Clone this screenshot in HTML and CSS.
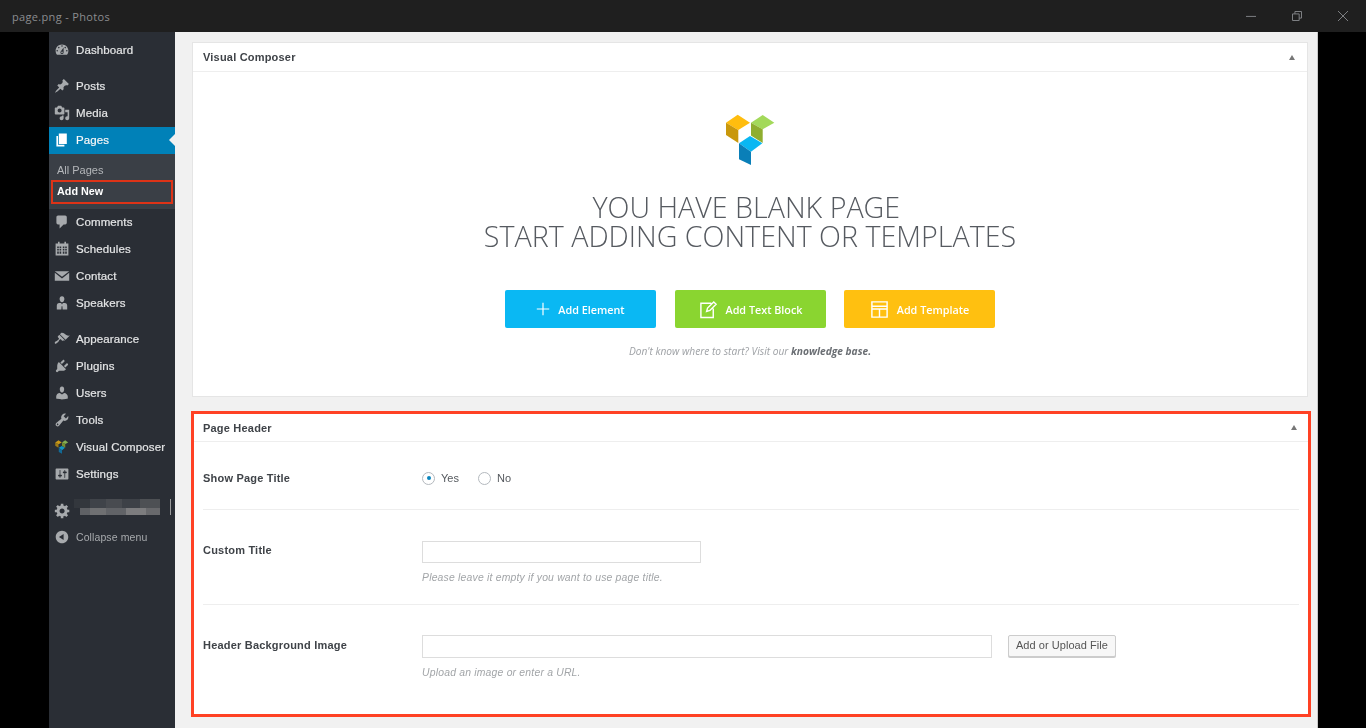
FILE: index.html
```html
<!DOCTYPE html>
<html lang="en">
<head>
<meta charset="utf-8">
<title>page.png - Photos</title>
<link rel="stylesheet" href="styles.css">
</head>
<body>
<div class="app">
  <header class="titlebar">
    <span class="title-text">page.png - Photos</span>
    <div class="win-controls">
      <svg class="win-icon" viewBox="0 0 12 12"><path d="M0 6.500h12" /></svg>
      <svg class="win-icon" viewBox="0 0 12 12"><path d="M.6 3.500h8V11.400h-8zM3.500 3.500V.6h7.900v7.900H8.600" /></svg>
      <svg class="win-icon" viewBox="0 0 12 12"><path d="M0 0l12 12M12 0L0 12" /></svg>
    </div>
  </header>
  <div class="viewer">
    <nav class="sidebar">
      <a class="item"><svg class="ico" viewBox="0 0 20 20"><path d="M3.76 16h12.48c1.1-1.37 1.76-3.11 1.76-5 0-4.42-3.58-8-8-8s-8 3.58-8 8c0 1.89.66 3.63 1.76 5zM10 4c.55 0 1 .45 1 1s-.45 1-1 1-1-.45-1-1 .45-1 1-1zM6 6c.55 0 1 .45 1 1s-.45 1-1 1-1-.45-1-1 .45-1 1-1zm8 0c.55 0 1 .45 1 1s-.45 1-1 1-1-.45-1-1 .45-1 1-1zm-5.37 5.55L12 7v6c0 1.1-.9 2-2 2s-2-.9-2-2c0-.57.24-1.08.63-1.45zM4 10c.55 0 1 .45 1 1s-.45 1-1 1-1-.45-1-1 .45-1 1-1zm12 0c.55 0 1 .45 1 1s-.45 1-1 1-1-.45-1-1 .45-1 1-1zm-5 3c0-.55-.45-1-1-1s-1 .45-1 1 .45 1 1 1 1-.45 1-1z" fill-rule="evenodd"/></svg>Dashboard</a>
      <a class="item gap"><svg class="ico" viewBox="0 0 20 20"><path d="M10.44 3.02l1.82-1.82 6.36 6.35-1.83 1.82c-1.05-.68-2.48-.57-3.41.36l-.75.75c-.92.93-1.04 2.35-.35 3.41l-1.83 1.82-2.41-2.41-2.8 2.79c-.42.42-3.38 2.71-3.8 2.29s1.86-3.39 2.28-3.81l2.79-2.79L4.1 9.36l1.83-1.82c1.05.69 2.48.57 3.4-.36l.75-.75c.93-.92 1.05-2.35.36-3.41z"/></svg>Posts</a>
      <a class="item"><svg class="ico" viewBox="0 0 20 20"><path d="M13 11V4c0-.55-.45-1-1-1h-1.67L9 1H5L3.67 3H2c-.55 0-1 .45-1 1v7c0 .55.45 1 1 1h10c.55 0 1-.45 1-1zM7 4.5c1.38 0 2.5 1.12 2.5 2.5S8.38 9.5 7 9.5 4.5 8.38 4.5 7 5.62 4.5 7 4.5zM14 6h5v10.5c0 1.38-1.12 2.5-2.5 2.5S14 17.88 14 16.5s1.12-2.5 2.5-2.5c.17 0 .34.02.5.05V9h-3V6zm-4 8.05V13h2v3.5c0 1.38-1.12 2.5-2.5 2.5S7 17.88 7 16.5 8.12 14 9.5 14c.17 0 .34.02.5.05z" fill-rule="evenodd"/></svg>Media</a>
      <a class="item current"><svg class="ico" viewBox="0 0 20 20"><path d="M6 15V2h10v13H6zm-1 1h8v2H3V5h2v11z"/></svg>Pages<span class="notch"></span></a>
      <div class="submenu">
        <a class="sub-link">All Pages</a>
        <a class="sub-link active">Add New</a>
      </div>
      <a class="item"><svg class="ico" viewBox="0 0 20 20"><path d="M5 2h9c1.1 0 2 .9 2 2v7c0 1.1-.9 2-2 2h-2l-5 5v-5H5c-1.1 0-2-.9-2-2V4c0-1.1.9-2 2-2z"/></svg>Comments</a>
      <a class="item"><svg class="ico" viewBox="0 0 20 20"><path d="M5 1h2v2h6V1h2v2h3v15H2V3h3V1zM4 7v2h2V7H4zm3 0v2h2V7H7zm4 0v2h2V7h-2zm3 0v2h2V7h-2zM4 10v2h2v-2H4zm3 0v2h2v-2H7zm4 0v2h2v-2h-2zm3 0v2h2v-2h-2zM4 13v3h2v-3H4zm3 0v3h2v-3H7zm4 0v3h2v-3h-2zm3 0v3h2v-3h-2z" fill-rule="evenodd"/></svg>Schedules</a>
      <a class="item"><svg class="ico" viewBox="0 0 20 20"><path d="M1 4h18L10 11 1 4zm0 2l9 7 9-7v10H1V6z"/></svg>Contact</a>
      <a class="item"><svg class="ico" viewBox="0 0 20 20"><path d="M10 1.500c2 0 3 1.600 3 3.400S11.800 9 10 9 7 6.700 7 4.900 8 1.500 10 1.500zM6.500 10h2.300L10 12l1.200-2h2.300c2 0 3 1.500 3 3.500V18h-5.700l-.3-4h-1l-.3 4H3.500v-4.500c0-2 1-3.500 3-3.500z"/></svg>Speakers</a>
      <a class="item gap"><svg class="ico" viewBox="0 0 20 20"><path d="M14.480 11.060L7.410 3.990l1.500-1.500c.5-.56 2.300-.47 3.510.32 1.210.8 1.430 1.280 2.910 2.100 1.180.64 2.450 1.260 4.450.85zm-.71.71L6.700 4.700 4.930 6.470c-.39.39-.39 1.020 0 1.410l1.060 1.060c.39.39.39 1.030 0 1.420-.6.6-1.430 1.110-2.210 1.690-.35.26-.7.53-1.010.84C1.430 13.230.4 14.850 1.150 15.600c.74.75 2.370-.28 3.700-1.620.3-.31.58-.66.84-1.010.58-.78 1.090-1.610 1.690-2.210.39-.39 1.020-.39 1.410 0l1.060 1.060c.39.39 1.020.39 1.410 0z"/></svg>Appearance</a>
      <a class="item"><svg class="ico" viewBox="0 0 20 20"><path d="M13.110 4.360L9.870 7.600 8 5.730l3.240-3.240c.35-.34 1.050-.2 1.560.32.52.51.66 1.210.31 1.550zm-8 1.770l.91-1.120 9.010 9.010-1.190.84c-.71.71-2.630 1.160-3.820 1.160H6.140L4.900 17.260c-.59.59-1.540.59-2.120 0-.59-.58-.59-1.530 0-2.120l1.240-1.240v-3.880c0-1.130.4-3.190 1.090-3.890zm7.260 3.970l3.240-3.240c.34-.35 1.040-.21 1.550.31.52.51.66 1.210.31 1.550l-3.240 3.250z"/></svg>Plugins</a>
      <a class="item"><svg class="ico" viewBox="0 0 20 20"><path d="M10 9.250c-2.270 0-2.730-3.440-2.730-3.440C7 4.020 7.820 2 9.970 2c2.160 0 2.980 2.020 2.710 3.810 0 0-.41 3.440-2.680 3.440zm0 2.570L12.720 10c2.390 0 4.520 2.330 4.520 4.530v2.490s-3.650 1.130-7.240 1.130c-3.650 0-7.240-1.130-7.240-1.130v-2.490c0-2.250 1.940-4.480 4.470-4.480z"/></svg>Users</a>
      <a class="item"><svg class="ico" viewBox="0 0 20 20"><path d="M16.680 9.770c-1.340 1.340-3.300 1.670-4.950.99l-5.410 6.520c-.99.99-2.590.99-3.580 0s-.99-2.590 0-3.570l6.520-5.420c-.68-1.650-.35-3.610.99-4.950 1.280-1.280 3.120-1.620 4.720-1.060l-2.890 2.890 2.820 2.820 2.860-2.870c.53 1.580.18 3.390-1.080 4.650zM3.810 16.210c.4.39 1.040.39 1.430 0 .4-.4.4-1.040 0-1.430-.39-.4-1.030-.4-1.430 0-.39.39-.39 1.030 0 1.430z"/></svg>Tools</a>
      <a class="item"><svg class="ico vc" viewBox="0 0 50 52"><polygon class="c-y" points="0,9 12,1 24,9 12,16"/><polygon class="c-yd" points="0,9 12,16 12,29 0,21"/><polygon class="c-g" points="25,9 37,1 48,9 37,15"/><polygon class="c-gd" points="25,9 37,15 37,29 25,21"/><polygon class="c-b" points="13,29 24,22 36,29 25,38"/><polygon class="c-bd" points="13,29 25,38 25,51 13,45"/></svg>Visual Composer</a>
      <a class="item"><svg class="ico" viewBox="0 0 20 20"><path d="M18 16V4c0-.55-.45-1-1-1H3c-.55 0-1 .45-1 1v12c0 .55.45 1 1 1h14c.55 0 1-.45 1-1zM8 11h1c.55 0 1 .45 1 1s-.45 1-1 1H8v1.500c0 .28-.22.5-.5.5s-.5-.22-.5-.5V13H6c-.55 0-1-.45-1-1s.45-1 1-1h1V5.500c0-.28.22-.5.5-.5s.5.22.5.5V11zm5-2h-1c-.55 0-1-.45-1-1s.45-1 1-1h1V5.500c0-.28.22-.5.5-.5s.5.22.5.5V7h1c.55 0 1 .45 1 1s-.45 1-1 1h-1v5.500c0 .28-.22.5-.5.5s-.5-.22-.5-.5V9z" fill-rule="evenodd"/></svg>Settings</a>
      <div class="item gap user-row">
        <svg class="ico gear" viewBox="0 0 20 20"><path d="M18 12h-2.180c-.17.7-.44 1.350-.81 1.930l1.540 1.540-2.100 2.100-1.540-1.540c-.58.36-1.230.63-1.910.79V19H8v-2.180c-.68-.16-1.330-.43-1.910-.79l-1.540 1.540-2.120-2.120 1.540-1.540c-.36-.58-.63-1.230-.79-1.910H1V9.030h2.170c.16-.7.44-1.350.8-1.940L2.430 5.550l2.100-2.100 1.540 1.540c.58-.37 1.240-.64 1.930-.81V2h3v2.180c.68.16 1.330.43 1.910.79l1.540-1.540 2.120 2.120-1.540 1.540c.36.59.64 1.240.8 1.940H18V12zm-8.500 1.500c1.660 0 3-1.340 3-3s-1.340-3-3-3-3 1.340-3 3 1.340 3 3 3z" fill-rule="evenodd"/></svg>
        <div class="redacted"><span class="red-top"></span><span class="red-bottom"></span></div>
        <span class="red-bar"></span>
      </div>
      <a class="item collapse"><svg class="ico" viewBox="0 0 20 20"><path d="M10 2.160c4.330 0 7.840 3.510 7.840 7.840s-3.510 7.840-7.840 7.840S2.160 14.330 2.160 10 5.710 2.160 10 2.160zm2 11.720V6.120L6.180 9.970z" fill-rule="evenodd"/></svg>Collapse menu</a>
    </nav>
    <main class="content">
      <section class="card composer">
        <div class="card-head"><h2>Visual Composer</h2><span class="caret"></span></div>
        <div class="composer-body">
          <svg class="logo" viewBox="0 0 50 52"><polygon class="c-y" points="0,8.700 11.700,.7 24,8.700 12.300,16"/><polygon class="c-yd" points="0,8.700 12.300,16 12.300,29 0,21"/><polygon class="c-g" points="25,8.700 36.700,1 48.300,8.700 36.700,15.300"/><polygon class="c-gd" points="25,8.700 36.700,15.300 36.700,29 25,21.500"/><polygon class="c-b" points="13,29.300 24,22 36.300,29.300 25,37.700"/><polygon class="c-bd" points="13,29.300 25,37.700 25,51 13,45.300"/></svg>
          <h1 class="blank">YOU HAVE BLANK PAGE&nbsp;<br>START ADDING CONTENT OR TEMPLATES</h1>
          <div class="cta-row">
            <a class="cta cta-blue"><svg class="cta-ico" viewBox="0 0 18 18"><path d="M9 1v16M1 9h16"/></svg>Add Element</a>
            <a class="cta cta-green"><svg class="cta-ico big" viewBox="0 0 20 20"><path d="M13 3.500H2v15h13V9M8 12l1-3.500L15.500 2 18 4.500 11.500 11z"/></svg>Add Text Block</a>
            <a class="cta cta-yellow"><svg class="cta-ico big" viewBox="0 0 20 20"><path d="M2 2h16v16H2zM2 6.500h16M2 9.500h16M10 9.500V18"/></svg>Add Template</a>
          </div>
          <p class="hint">Don't know where to start? Visit our <b>knowledge base.</b></p>
        </div>
      </section>
      <section class="card page-header">
        <div class="card-head"><h2>Page Header</h2><span class="caret"></span></div>
        <div class="fields">
          <div class="field field-radio">
            <label class="f-label">Show Page Title</label>
            <div class="f-control radios">
              <span class="radio on"></span><span class="r-text">Yes</span>
              <span class="radio"></span><span class="r-text">No</span>
            </div>
          </div>
          <div class="field field-title">
            <label class="f-label">Custom Title</label>
            <div class="f-control">
              <div class="input short"></div>
              <p class="f-help">Please leave it empty if you want to use page title.</p>
            </div>
          </div>
          <div class="field field-image">
            <label class="f-label">Header Background Image</label>
            <div class="f-control">
              <div class="input-row"><div class="input long"></div><button class="upload">Add or Upload File</button></div>
              <p class="f-help">Upload an image or enter a URL.</p>
            </div>
          </div>
        </div>
      </section>
    </main>
  </div>
</div>
</body>
</html>
```
FILE: styles.css
```css
* { box-sizing: border-box; }
html, body { margin: 0; height: 100%; }
body { background: #000; font-family: "Liberation Sans", Arial, sans-serif; overflow: hidden; }
.app { width: 1366px; height: 728px; display: flex; flex-direction: column; overflow: hidden; }

.titlebar { height: 32px; flex: none; background: #1f1f1f; display: flex; align-items: center; justify-content: space-between; padding-left: 12px; }
.title-text { font: 11px "Open Sans", sans-serif; letter-spacing: .33px; color: #8b8d90; }
.win-controls { display: flex; align-items: center; }
.win-icon { width: 10px; height: 10px; margin: 0 18px; fill: none; stroke: #7d7f82; stroke-width: 1.200; }

.viewer { flex: 1; min-height: 0; display: flex; padding: 0 48px 0 49px; filter: blur(.35px); }

.sidebar { width: 126px; flex: none; background: #2a2e35; padding-top: 5px; display: flex; flex-direction: column; }
.item { height: 27px; flex: none; display: flex; align-items: center; padding: 0 0 1px 27px; position: relative; font-size: 11.500px; letter-spacing: .12px; color: #e4e5e6; font-weight: 400; -webkit-text-stroke: .2px #e4e5e6; }
.item.gap { margin-top: 9px; }
.ico { position: absolute; left: 5px; top: 5px; width: 16px; height: 16px; fill: #a7aaad; }
.ico.vc { left: 6px; top: 6px; width: 14px; height: 14px; opacity: .75; }
.current { background: #0081b8; color: #fff; }
.current .ico { fill: #fff; }
.notch { position: absolute; right: 0; top: 7px; border: 6px solid transparent; border-right-color: #f1f1f1; border-left-width: 0; }
.submenu { height: 55px; flex: none; background: #3a3f46; padding-top: 5px; display: flex; flex-direction: column; }
.sub-link { height: 21px; flex: none; font-size: 11px; line-height: 22px; padding-left: 8px; color: #b4b7ba; }
.sub-link.active { height: 24px; margin: 0 2px; padding-left: 4px; font-size: 10.800px; line-height: 18px; color: #fff; font-weight: 700; border: 2px solid #dd3317; }
.redacted { display: flex; flex-direction: column; position: absolute; left: 25px; top: 2px; width: 86px; }
.red-top { height: 9px; background: linear-gradient(90deg, #33373d 0 16px, #3f4349 16px 32px, #484b50 32px 48px, #3d4147 48px 66px, #4d5054 66px); }
.red-bottom { height: 7px; margin-left: 6px; background: linear-gradient(90deg, #5f6165 0 10px, #6f7072 10px 26px, #616367 26px 46px, #7c7c7e 46px 66px, #68696c 66px); }
.red-bar { position: absolute; left: 121px; top: 2px; width: 1px; height: 16px; background: #9a9b9c; }
.gear { top: 5px; width: 17px; height: 17px; }
.collapse { color: #a7aaad; font-size: 10.500px; -webkit-text-stroke: 0; letter-spacing: .1px; }

.c-y { fill: #ffbd0e; } .c-yd { fill: #c9980c; }
.c-g { fill: #a3d95a; } .c-gd { fill: #8fae2f; }
.c-b { fill: #0ab7f2; } .c-bd { fill: #0a7fb8; }

.content { flex: 1; min-width: 0; background: #f1f1f1; border-right: 1px solid #c9c9c9; padding: 10px 9px 0 17px; display: flex; flex-direction: column; }
.card { background: #fff; flex: none; }
.composer { height: 355px; border: 1px solid #e5e5e5; }
.card-head { height: 29px; display: flex; align-items: center; justify-content: space-between; padding: 0 12px 0 10px; border-bottom: 1px solid #eee; }
.card-head h2 { margin: 0; font-size: 11px; font-weight: 700; letter-spacing: .2px; color: #3f4348; }
.caret { width: 0; height: 0; border: 3.500px solid transparent; border-top-width: 0; border-bottom: 5px solid #777; }

.composer-body { display: flex; flex-direction: column; align-items: center; padding-top: 42px; }
.logo { width: 50px; height: 52px; margin-left: 2px; }
.blank { margin: 26px 0 0; font: 300 28.650px/29px "Open Sans", sans-serif; color: #565a60; text-align: center; }
.cta-row { display: flex; gap: 19px; margin-top: 40px; }
.cta { width: 151px; height: 38px; border-radius: 2px; display: flex; align-items: center; justify-content: center; gap: 8px; font: 600 10.800px "Open Sans", sans-serif; color: #fff; }
.cta-blue { background: #0ab8f3; }
.cta-green { background: #8ad530; }
.cta-yellow { background: #ffc010; margin-left: -1px; }
.cta-ico { width: 14px; height: 14px; fill: none; stroke: #fff; stroke-width: 1.500; }
.cta-ico.big { width: 19px; height: 19px; }
.hint { margin: 16px 0 0; font: italic 10.200px "Open Sans", sans-serif; color: #9ea1a5; }
.hint b { color: #6a6e73; }

.page-header { height: 306px; margin: 14px -3px 0 -1px; border: 3px solid #ff4124; }
.page-header .card-head { height: 28px; padding: 0 11px 0 9px; }
.fields { padding: 0 9px; }
.field { display: flex; border-bottom: 1px solid #eee; }
.field:last-child { border-bottom: 0; }
.field-radio { height: 68px; padding-top: 27px; }
.field-title { height: 95px; padding-top: 31px; }
.field-image { padding-top: 30px; }
.f-label { width: 219px; flex: none; font-size: 11px; font-weight: 700; letter-spacing: .2px; color: #3f4348; line-height: 18px; }
.field-image .f-label { line-height: 20px; }
.f-control { flex: 1; min-width: 0; }
.radios { display: flex; align-items: center; height: 18px; font-size: 11px; color: #55595e; }
.radio { width: 13px; height: 13px; border-radius: 50%; border: 1px solid #b4b9be; background: #fff; display: flex; align-items: center; justify-content: center; }
.radio.on::after { content: ""; width: 4px; height: 4px; border-radius: 50%; background: #0a85bd; }
.r-text { margin: 0 19px 0 6px; }
.input { height: 22px; border: 1px solid #ddd; background: #fff; }
.input.short { width: 279px; }
.input.long { width: 570px; height: 23px; }
.input-row { display: flex; gap: 16px; }
.upload { width: 108px; height: 22px; padding: 0 0 2px; border: 1px solid #ccc; border-radius: 2px; background: #f7f7f7; box-shadow: 0 1px 0 #ccc; font: 11px "Liberation Sans", sans-serif; letter-spacing: .05px; color: #555; }
.f-help { margin: 9px 0 0; font: italic 10.400px "Liberation Sans", sans-serif; letter-spacing: .2px; color: #a2a5a8; }
```
